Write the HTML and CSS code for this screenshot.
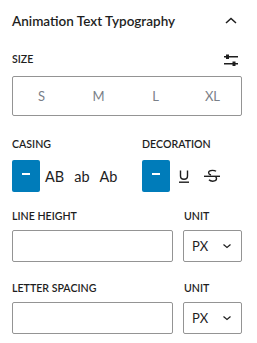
FILE: index.html
```html
<!DOCTYPE html>
<html lang="en">
<head>
    <meta charset="UTF-8">
    <meta name="viewport" content="width=device-width, initial-scale=1.0">
    <title>Animation Text Typography</title>
    <link rel="stylesheet" href="styles.css">
</head>
<body>
<div class="panel">
    <!-- Cabeçalho do painel -->
    <div class="panel-header">
        <h2>Animation Text Typography</h2>
        <svg class="chevron" width="12" height="7" viewBox="0 0 12 7"><path d="M1 6L6 1.5L11 6" fill="none" stroke="#1e1e1e" stroke-width="1.5"/></svg>
    </div>

    <!-- Tamanho -->
    <div class="label-row">
        <span class="label">Size</span>
        <svg class="sliders" width="14" height="12" viewBox="0 0 14 12">
            <rect x="0" y="2" width="14" height="1.5" fill="#1e1e1e"/>
            <rect x="2" y="0.5" width="3" height="4.5" fill="#1e1e1e"/>
            <rect x="0" y="9" width="14" height="1.5" fill="#1e1e1e"/>
            <rect x="8.5" y="7.5" width="3" height="4.5" fill="#1e1e1e"/>
        </svg>
    </div>
    <div class="size-box">
        <span>S</span>
        <span>M</span>
        <span>L</span>
        <span>XL</span>
    </div>

    <!-- Caixa e decoração -->
    <div class="two-cols">
        <div>
            <div class="label">Casing</div>
            <div class="btn-group">
                <button class="btn active"><span class="dash"></span></button>
                <button class="btn text">AB</button>
                <button class="btn text">ab</button>
                <button class="btn text">Ab</button>
            </div>
        </div>
        <div>
            <div class="label">Decoration</div>
            <div class="btn-group">
                <button class="btn active"><span class="dash"></span></button>
                <button class="btn icon">
                    <svg width="24" height="24" viewBox="0 0 24 24"><path d="M8.5 6.5V12c0 2 1.4 3.2 3.5 3.2s3.5-1.2 3.5-3.2V6.5" fill="none" stroke="#1e1e1e" stroke-width="1.4"/><rect x="7" y="17.5" width="10" height="1.4" fill="#1e1e1e"/></svg>
                </button>
                <button class="btn icon strike">
                    <svg width="24" height="24" viewBox="0 0 24 24"><path d="M16 7.3c-.6-.5-1.9-.9-3.6-.9-2.2 0-3.8.9-3.8 2.4 0 1.1.8 1.8 2.4 2.2M9 15.8c.7.8 2 1.4 3.7 1.4 2.3 0 3.8-1 3.8-2.6 0-.8-.3-1.4-.9-1.8" fill="none" stroke="#1e1e1e" stroke-width="1.4"/><rect x="4" y="11.6" width="16" height="1.4" fill="#1e1e1e"/></svg>
                </button>
            </div>
        </div>
    </div>

    <!-- Altura da linha -->
    <div class="field-row">
        <div class="field-main">
            <div class="label">Line Height</div>
            <input type="text" class="input">
        </div>
        <div class="field-unit">
            <div class="label">Unit</div>
            <div class="select">PX <svg width="10" height="6" viewBox="0 0 10 6"><path d="M1.5 1.5L5 4.5L8.5 1.5" fill="none" stroke="#1e1e1e" stroke-width="1.2"/></svg></div>
        </div>
    </div>

    <!-- Espaçamento entre letras -->
    <div class="field-row">
        <div class="field-main">
            <div class="label">Letter Spacing</div>
            <input type="text" class="input">
        </div>
        <div class="field-unit">
            <div class="label">Unit</div>
            <div class="select">PX <svg width="10" height="6" viewBox="0 0 10 6"><path d="M1.5 1.5L5 4.5L8.5 1.5" fill="none" stroke="#1e1e1e" stroke-width="1.2"/></svg></div>
        </div>
    </div>
</div>
</body>
</html>
```

FILE: styles.css
```css
body {
    margin: 0;
    padding: 0;
    background: #fff;
    font-family: Lato, "Noto Sans", sans-serif;
    color: #1e1e1e;
}

.panel {
    width: 230px;
    padding: 11px 15px 0 12px;
}

.panel-header {
    display: flex;
    justify-content: space-between;
    align-items: center;
    height: 20px;
}

h2 {
    margin: 0;
    font-size: 13.5px;
    font-weight: 600;
    line-height: 20px;
}

.chevron {
    margin-right: 5px;
    margin-top: -2px;
}

.label {
    font-size: 10.6px;
    font-weight: 600;
    line-height: 16px;
    text-transform: uppercase;
}

.label-row {
    display: flex;
    justify-content: space-between;
    align-items: center;
    margin-top: 20px;
    height: 16px;
}

.sliders {
    margin-right: 4px;
    margin-top: 2px;
}

.size-box {
    display: grid;
    grid-template-columns: repeat(4, 1fr);
    align-items: center;
    height: 38px;
    margin-top: 9px;
    border: 1px solid #949494;
    border-radius: 2px;
    font-size: 13px;
    color: #7a8088;
    text-align: center;
}

.two-cols {
    display: grid;
    grid-template-columns: 130px 1fr;
    margin-top: 20px;
}

.btn-group {
    display: flex;
    align-items: center;
    margin-top: 8px;
}

.btn {
    height: 32px;
    padding: 0;
    border: none;
    background: none;
    color: #1e1e1e;
    font-family: inherit;
    cursor: pointer;
}

.btn.active {
    width: 28px;
    background-color: #007cba;
    border-radius: 2px;
    display: flex;
    align-items: center;
    justify-content: center;
}

.dash {
    display: block;
    width: 8px;
    height: 1.5px;
    margin-top: -4px;
    background: #fff;
}

.btn.text {
    padding: 0 5px;
    font-size: 14.5px;
}

.btn.text:first-of-type {
    margin-left: -1px;
}

.btn.icon {
    display: flex;
    align-items: center;
    justify-content: center;
    width: 24px;
    margin-left: 2px;
}

.btn.icon.strike {
    margin-left: 4px;
}

.field-row {
    display: flex;
    gap: 10px;
    margin-top: 16px;
}

.field-row + .field-row {
    margin-top: 18px;
}

.field-main {
    flex: 1;
}

.field-unit {
    width: 59px;
}

.field-unit .label {
    padding-left: 1px;
}

.input {
    display: block;
    width: 100%;
    height: 32px;
    margin-top: 6px;
    border: 1px solid #949494;
    border-radius: 2px;
    box-sizing: border-box;
}

.select {
    display: flex;
    justify-content: space-between;
    align-items: center;
    height: 32px;
    margin-top: 6px;
    padding: 0 9px 0 8px;
    border: 1px solid #949494;
    border-radius: 2px;
    box-sizing: border-box;
    font-size: 13px;
}
```
